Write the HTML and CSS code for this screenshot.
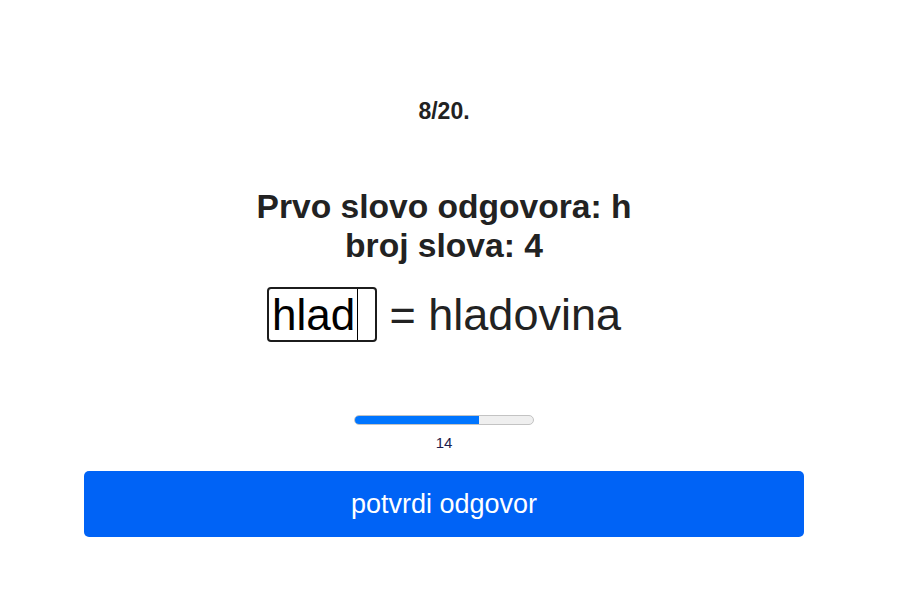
FILE: index.html
```html
<!DOCTYPE html>
<html lang="hr">
<head>
<meta charset="utf-8">
<title>Kviz</title>
<link rel="stylesheet" href="styles.css">
</head>
<body>
<div class="page">
  <main class="quiz">
    <div class="counter">8/20.</div>
    <h1 class="hint">Prvo slovo odgovora: h<br>broj slova: 4</h1>
    <div class="answer-row">
      <span class="field">
        <input class="answer" type="text" value="hlad" autofocus>
        <span class="caret"></span>
      </span>
      <span class="solution">&nbsp;= hladovina</span>
    </div>
    <div class="timer">
      <div class="track"><div class="fill" style="width:70%"></div></div>
      <div class="timer-label">14</div>
    </div>
    <button class="submit" type="button">potvrdi odgovor</button>
  </main>
</div>
</body>
</html>
```

FILE: styles.css
```css
html, body {
  margin: 0;
  padding: 0;
  background: #fff;
}
body {
  font-family: "Liberation Sans", Arial, sans-serif;
  color: #222;
}
.page {
  padding-right: 13px;
}
.quiz {
  max-width: 720px;
  margin: 0 auto;
  display: flex;
  flex-direction: column;
  align-items: center;
  text-align: center;
  padding-top: 98px;
}
.counter {
  font-size: 23px;
  font-weight: bold;
  line-height: 26px;
}
.hint {
  margin: 63px 0 0;
  font-size: 33.6px;
  line-height: 39px;
  font-weight: bold;
}
.answer-row {
  margin-top: 22px;
  display: flex;
  align-items: center;
  justify-content: center;
  height: 55px;
  font-size: 45px;
}
.field {
  position: relative;
  display: block;
  width: 110px;
  height: 55px;
}
.answer {
  display: block;
  box-sizing: border-box;
  width: 110px;
  height: 55px;
  border: 2px solid #1c1c1c;
  border-radius: 4px;
  padding: 0 3px;
  font: 44px "Liberation Sans", Arial, sans-serif;
  color: #000;
  outline: none;
  background: #fff;
  caret-color: transparent;
}
.caret {
  position: absolute;
  left: 90px;
  top: 2px;
  width: 1px;
  height: 51px;
  background: #000;
}
.solution {
  white-space: pre;
  line-height: 55px;
}
.timer {
  margin-top: 73px;
  display: flex;
  flex-direction: column;
  align-items: center;
}
.track {
  box-sizing: border-box;
  width: 180px;
  height: 10px;
  border: 1px solid #c3c3c3;
  border-radius: 5px;
  background: #efefef;
  overflow: hidden;
}
.fill {
  height: 100%;
  background: #0075ff;
  margin: -1px 0 0 -1px;
  padding-bottom: 2px;
}
.timer-label {
  margin-top: 10px;
  font-size: 15px;
  line-height: 16px;
  color: #1d1d4d;
}
.submit {
  margin-top: 20px;
  width: 720px;
  height: 66px;
  border: none;
  border-radius: 5px;
  background: #0063f6;
  color: #fff;
  font: 27px "Liberation Sans", Arial, sans-serif;
  cursor: pointer;
}
```
